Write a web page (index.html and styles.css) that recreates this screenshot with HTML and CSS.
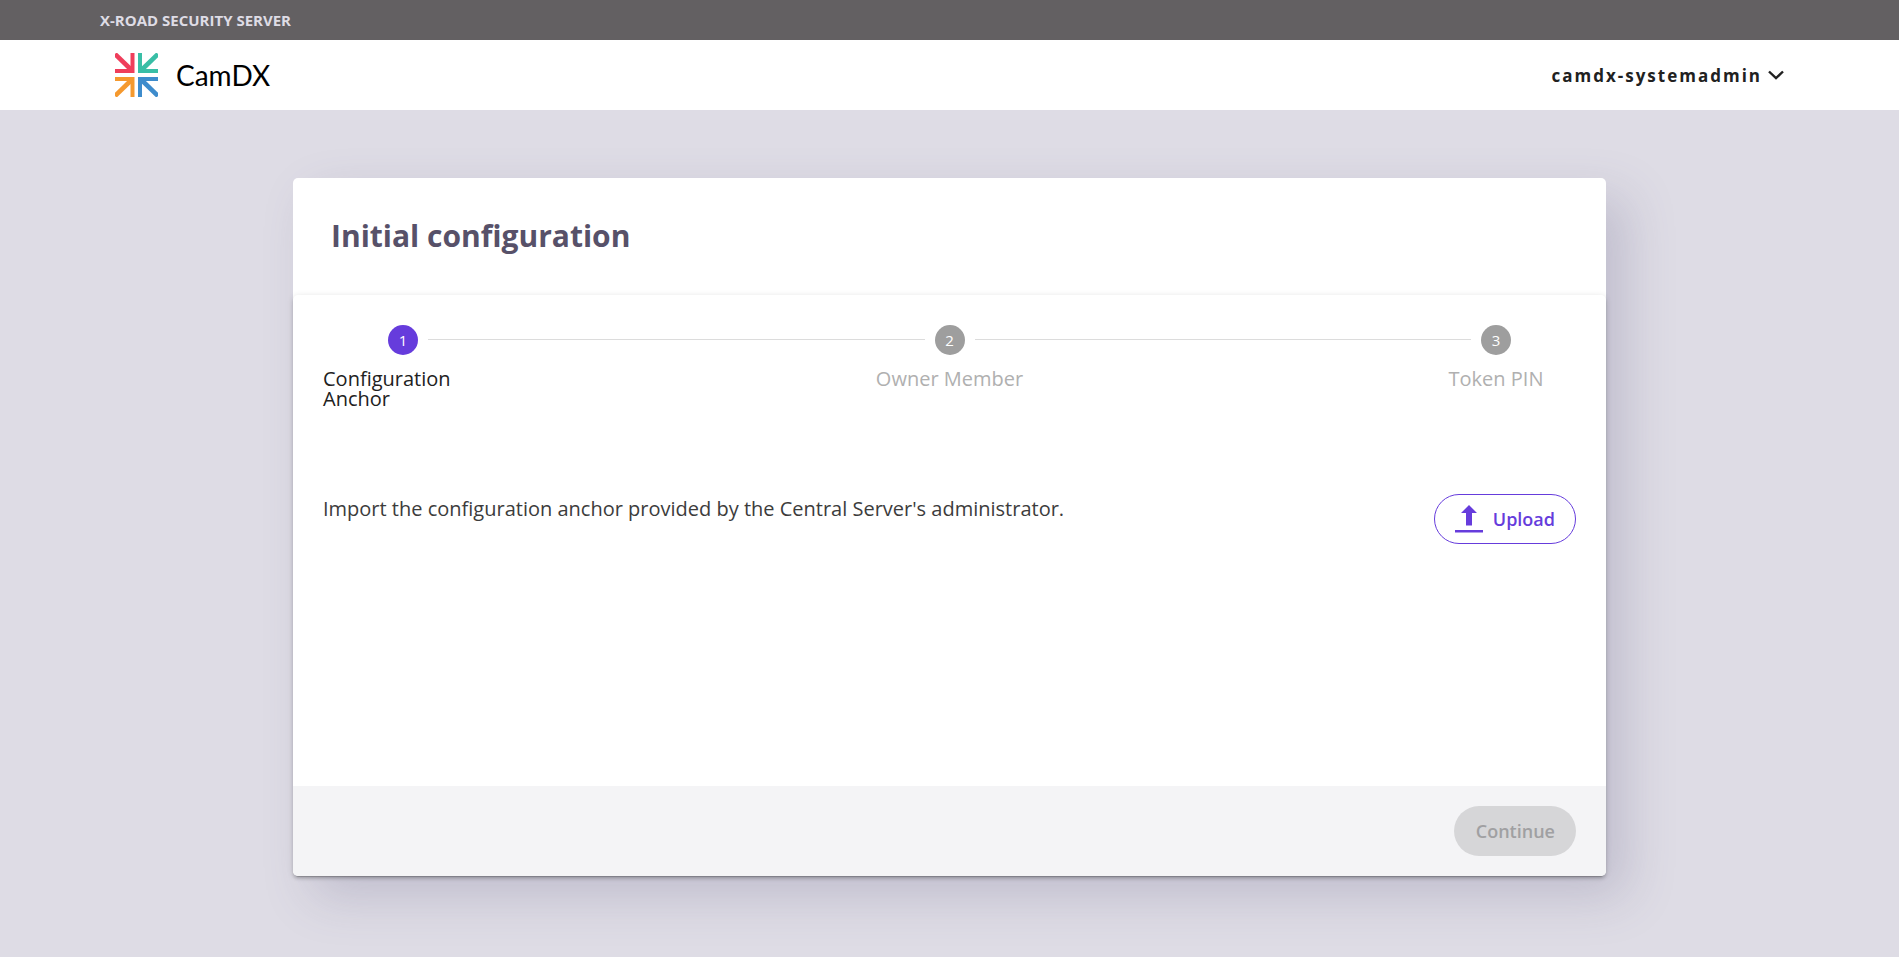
FILE: index.html
```html
<!DOCTYPE html>
<html lang="en">
<head>
  <meta charset="utf-8">
  <meta name="viewport" content="width=device-width, initial-scale=1">
  <title>X-Road Security Server</title>
  <link rel="stylesheet" href="styles.css">
</head>
<body>
  <div class="ribbon">X-ROAD SECURITY SERVER</div>
  <header class="topbar">
    <a class="brand" href="#">
      <svg class="brand-mark" viewBox="0 0 43 44" fill="none" stroke-width="4" aria-hidden="true">
        <g stroke="#ef3e5b"><path stroke-width="4.600" d="M0 1 17 17.500"/><path d="M0 18H17.500V0"/></g>
        <g stroke="#39bea6"><path stroke-width="4.600" d="M43 1 26 17.500"/><path d="M43 18H25V0"/></g>
        <g stroke="#f5992e"><path stroke-width="4.600" d="M0 43 17 26.500"/><path d="M0 26H17.500V44"/></g>
        <g stroke="#3e8ccc"><path stroke-width="4.600" d="M43 43 26 26.500"/><path d="M43 26H25V44"/></g>
      </svg>
      <span class="brand-name">CamDX</span>
    </a>
    <button class="user-menu" type="button">
      <span>camdx-systemadmin</span>
      <svg class="chevron" viewBox="0 0 16 10" fill="none" stroke="currentColor" stroke-width="2.400" aria-hidden="true"><path d="M1 1.500 8 8.200 15 1.500"/></svg>
    </button>
  </header>
  <main class="page">
    <section class="card">
      <h1 class="card-title">Initial configuration</h1>
      <div class="wizard">
        <ol class="steps">
          <li class="step step-active"><span class="step-number">1</span><span class="step-label">Configuration Anchor</span></li>
          <li class="step-line" aria-hidden="true"></li>
          <li class="step"><span class="step-number">2</span><span class="step-label">Owner Member</span></li>
          <li class="step-line" aria-hidden="true"></li>
          <li class="step"><span class="step-number">3</span><span class="step-label">Token PIN</span></li>
        </ol>
        <div class="content">
          <p class="description">Import the configuration anchor provided by the Central Server's administrator.</p>
          <button class="button button-outlined" type="button">
            <svg class="upload-icon" viewBox="0 0 28 28" fill="currentColor" aria-hidden="true"><path d="M14 0 22 8H17V20.500H11V8H6Z"/><path d="M0 25H28V27.500H0Z"/></svg>
            <span>Upload</span>
          </button>
        </div>
        <footer class="actions">
          <button class="button button-filled" type="button" disabled>Continue</button>
        </footer>
      </div>
    </section>
  </main>
</body>
</html>
```
FILE: styles.css
```css
* {
  box-sizing: border-box;
}

body {
  margin: 0;
  min-height: 100vh;
  background: #dedce5;
  color: #212121;
  font-family: "Open Sans", "Noto Sans", sans-serif;
}

button {
  font-family: inherit;
}

.ribbon {
  height: 40px;
  padding-left: 100px;
  background: #636062;
  color: #dedce5;
  font-size: 15px;
  font-weight: 700;
  line-height: 40px;
}

.topbar {
  display: flex;
  align-items: center;
  justify-content: space-between;
  height: 70px;
  padding: 0 115px;
  background: #fff;
}

.brand {
  display: flex;
  align-items: center;
  gap: 18px;
  color: #000;
  text-decoration: none;
}

.brand-mark {
  width: 43px;
  height: 44px;
}

.brand-name {
  font-family: Lato, sans-serif;
  font-size: 28px;
  line-height: 36px;
}

.user-menu {
  display: flex;
  align-items: center;
  gap: 6px;
  padding: 0;
  border: 0;
  background: none;
  color: #212121;
  font-size: 17px;
  font-weight: 700;
  letter-spacing: 2px;
}

.chevron {
  width: 16px;
  height: 10px;
}

.page {
  padding: 68px 24px 80px;
}

.card {
  max-width: 1313px;
  margin: 0 auto;
  border-radius: 5px;
  background: #fff;
  box-shadow: 20px 20px 50px rgba(87, 81, 125, 0.22);
}

.card-title {
  margin: 0;
  padding: 37px 38px 38px;
  color: #575169;
  font-size: 30px;
  font-weight: 700;
  line-height: 42px;
}

.wizard {
  border-radius: 5px;
  overflow: hidden;
  box-shadow: 0 4px 1px -3px rgba(0, 0, 0, 0.2), 0 3px 3px rgba(0, 0, 0, 0.14), 0 1px 6px rgba(0, 0, 0, 0.12);
}

.steps {
  display: flex;
  margin: 0;
  padding: 0;
  list-style: none;
}

.step {
  display: flex;
  flex-direction: column;
  align-items: center;
  gap: 14px;
  width: 220px;
  padding: 30px;
  color: #b0b0b0;
}

.step-active {
  color: #212121;
}

.step-number {
  width: 30px;
  height: 30px;
  border-radius: 50%;
  background: #9e9e9e;
  color: #fff;
  font-size: 15px;
  line-height: 30px;
  text-align: center;
}

.step-active .step-number {
  background: #663cdc;
}

.step-label {
  font-size: 20px;
  font-weight: 400;
  line-height: 20px;
}

.step-line {
  flex: 1;
  height: 1px;
  margin: 44px -85px 0;
  background: #dcdcdc;
}

.content {
  display: flex;
  align-items: flex-start;
  justify-content: space-between;
  gap: 24px;
  min-height: 347px;
  padding: 55px 30px 0;
}

.description {
  margin: 0;
  color: #3c3c3c;
  font-size: 20px;
  font-weight: 400;
  line-height: 30px;
}

.button {
  display: flex;
  align-items: center;
  height: 50px;
  border-radius: 25px;
  font-size: 18px;
  font-weight: 600;
}

.button-outlined {
  gap: 10px;
  padding: 0 20px;
  border: 1px solid #663cdc;
  background: #fff;
  color: #663cdc;
}

.upload-icon {
  width: 28px;
  height: 28px;
}

.button-filled {
  padding: 0 21px 0 22px;
  border: 0;
  background: #d6d6d8;
  color: #a0a0a2;
}

.actions {
  display: flex;
  justify-content: flex-end;
  padding: 20px 30px;
  background: #f4f4f6;
}
```
